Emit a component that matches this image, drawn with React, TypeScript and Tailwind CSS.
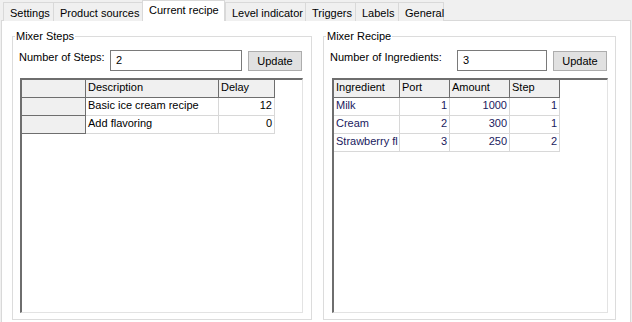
const tabs = [
  { label: "Settings", w: "w-[50px]" },
  { label: "Product sources", w: "w-[89px]" },
  { label: "Current recipe", w: "w-[83px]", active: true },
  { label: "Level indicator", w: "w-[80px]" },
  { label: "Triggers", w: "w-[50px]" },
  { label: "Labels", w: "w-[43px]" },
  { label: "General", w: "w-[46px]", last: true },
];

const steps = [
  { description: "Basic ice cream recipe", delay: 12 },
  { description: "Add flavoring", delay: 0 },
];

// ingredient column is too narrow for the full name, the grid shows it cut
const ingredients = [
  { name: "Milk", port: 1, amount: 1000, step: 1 },
  { name: "Cream", port: 2, amount: 300, step: 1 },
  { name: "Strawberry fl", port: 3, amount: 250, step: 2 },
];

function Tab({ label, w, active, last }: { label: string; w: string; active?: boolean; last?: boolean }) {
  if (active) {
    return (
      <div
        className={`${w} relative z-10 h-[21px] border-x border-t border-[#d9d9d9] bg-white pl-[6px] pt-[3px] leading-[13px]`}
      >
        {label}
      </div>
    );
  }
  return (
    <div
      className={`${w} h-[19px] border-l border-t border-[#d9d9d9] bg-[#f0f0f0] pl-[6px] pt-[4px] leading-[13px] ${
        last ? "border-r" : ""
      }`}
    >
      {label}
    </div>
  );
}

function HeaderCell({ w, children }: { w: string; children?: React.ReactNode }) {
  return (
    <div className={`${w} h-[18px] shrink-0 border-b border-r border-[#6e6e6e] bg-[#f0f0f0] pl-[2px] pt-[1px] leading-[13px]`}>
      {children}
    </div>
  );
}

function Cell({ w, right, children }: { w: string; right?: boolean; children?: React.ReactNode }) {
  return (
    <div
      className={`${w} h-[18px] shrink-0 overflow-hidden whitespace-nowrap border-b border-r border-[#d8d8d8] pt-[1px] leading-[13px] ${
        right ? "pr-[2px] text-right" : "pl-[2px]"
      }`}
    >
      {children}
    </div>
  );
}

function Toolbar({ label, inputW, labelW, value }: { label: string; inputW: string; labelW: string; value: string }) {
  return (
    <div className="mt-[7px] flex items-start pl-[6px]">
      <div className={`${labelW} pt-[1px] leading-[13px]`}>{label}</div>
      <div className={`${inputW} h-[21px] border border-[#7a7a7a] bg-white pl-[5px] pt-[3px] leading-[13px]`}>
        {value}
      </div>
      <button className="ml-[6px] mt-[1px] flex h-[20px] w-[54px] items-center justify-center border border-[#adadad] bg-[#e1e1e1] leading-[13px]">
        Update
      </button>
    </div>
  );
}

export default function App() {
  return (
    <div
      className="h-[322px] w-[632px] overflow-hidden bg-[#f0f0f0] text-[11px] text-black"
      style={{ fontFamily: '"Liberation Sans", Arial, sans-serif' }}
    >
      <div className="flex h-[21px] items-end pl-[3px]">
        {tabs.map((t) => (
          <Tab key={t.label} {...t} />
        ))}
      </div>
      <div className="-mt-[1px] ml-[1px] flex h-[320px] w-[630px] gap-[11px] border border-[#d9d9d9] bg-white pl-[10px] pt-[9px]">
        <fieldset className="h-[290px] w-[300px] border border-[#dcdcdc]">
          <legend className="ml-[2px] px-[1px] leading-[13px]">Mixer Steps</legend>
          <Toolbar label="Number of Steps:" labelW="w-[91px]" inputW="w-[132px]" value="2" />
          <div className="ml-[7px] mt-[7px] h-[235px] w-[283px] border-b border-l-2 border-r border-t-2 border-b-[#e3e3e3] border-l-[#6e6e6e] border-r-[#e3e3e3] border-t-[#6e6e6e]">
            <div className="flex">
              <HeaderCell w="w-[64px]" />
              <HeaderCell w="w-[133px]">Description</HeaderCell>
              <HeaderCell w="w-[56px]">Delay</HeaderCell>
            </div>
            {steps.map((s) => (
              <div key={s.description} className="flex">
                <HeaderCell w="w-[64px]" />
                <Cell w="w-[133px]">{s.description}</Cell>
                <Cell w="w-[56px]" right>
                  {s.delay}
                </Cell>
              </div>
            ))}
          </div>
        </fieldset>
        <fieldset className="h-[290px] w-[293px] border border-[#dcdcdc]">
          <legend className="ml-[2px] px-[1px] leading-[13px]">Mixer Recipe</legend>
          <Toolbar label="Number of Ingredients:" labelW="w-[127px]" inputW="w-[90px]" value="3" />
          <div className="ml-[8px] mt-[7px] h-[235px] w-[276px] border-b border-l-2 border-r border-t-2 border-b-[#e3e3e3] border-l-[#6e6e6e] border-r-[#e3e3e3] border-t-[#6e6e6e]">
            <div className="flex">
              <HeaderCell w="w-[66px]">Ingredient</HeaderCell>
              <HeaderCell w="w-[50px]">Port</HeaderCell>
              <HeaderCell w="w-[60px]">Amount</HeaderCell>
              <HeaderCell w="w-[50px]">Step</HeaderCell>
            </div>
            {ingredients.map((i) => (
              <div key={i.name} className="flex text-[#1a1a5e]">
                <Cell w="w-[66px]">{i.name}</Cell>
                <Cell w="w-[50px]" right>
                  {i.port}
                </Cell>
                <Cell w="w-[60px]" right>
                  {i.amount}
                </Cell>
                <Cell w="w-[50px]" right>
                  {i.step}
                </Cell>
              </div>
            ))}
          </div>
        </fieldset>
      </div>
    </div>
  );
}
